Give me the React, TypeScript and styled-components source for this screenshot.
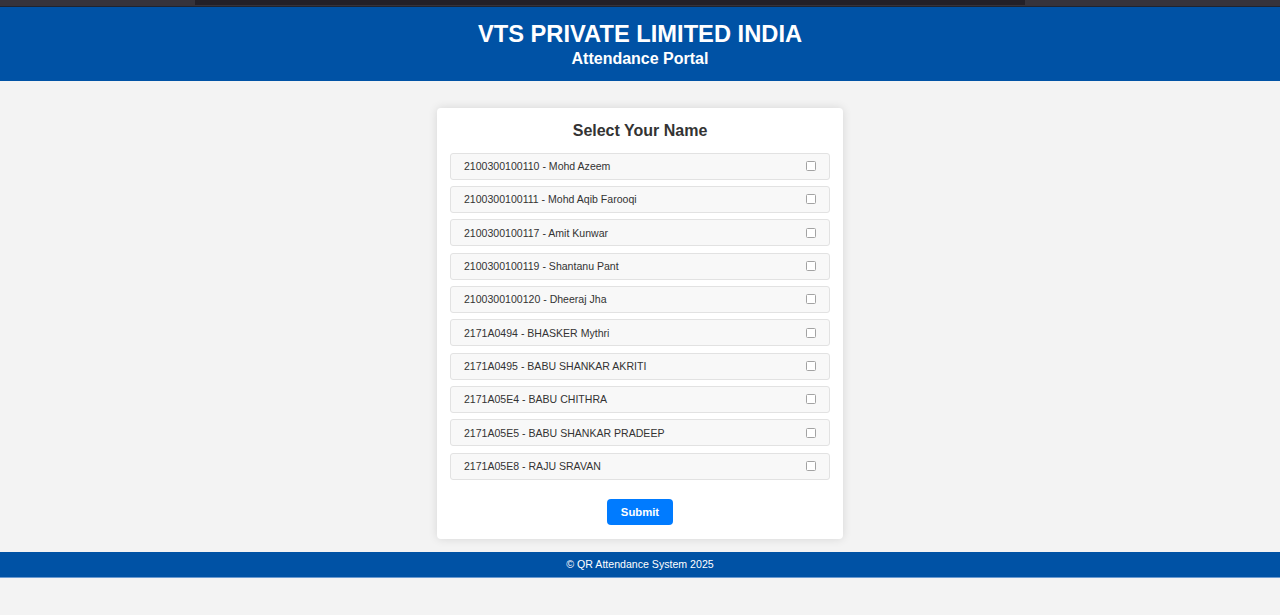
import React from "react";
import styled, { createGlobalStyle } from "styled-components";

const GlobalStyle = createGlobalStyle`
  html, body {
    margin: 0;
    padding: 0;
    background: #f3f3f3;
    font-family: "Liberation Sans", Arial, sans-serif;
  }
  * { box-sizing: border-box; }
`;

const Page = styled.div`
  display: flex;
  flex-direction: column;
  min-height: 615px;
  background: #f3f3f3;
`;

const TopStrip = styled.div`
  height: 7px;
  background: #36333b;
  border-bottom: 1px solid #1f2430;
  display: flex;
  padding-left: 195px;
`;

const TopTab = styled.div`
  width: 830px;
  height: 5px;
  background: #232028;
`;

const Header = styled.header`
  background: #0052a5;
  color: #ffffff;
  text-align: center;
  padding: 13px 0 13px;
`;

const Title = styled.h1`
  margin: 0;
  font-size: 23.7px;
  line-height: 28px;
  font-weight: 700;
`;

const Subtitle = styled.h2`
  margin: 1px 0 0;
  font-size: 16px;
  line-height: 19px;
  font-weight: 700;
`;

const Main = styled.main`
  display: flex;
  justify-content: center;
  padding: 27px 0 13px;
`;

const Card = styled.form`
  width: 406px;
  background: #ffffff;
  border-radius: 4px;
  box-shadow: 0 0 10px rgba(0, 0, 0, 0.12);
  padding: 13px 13px 14px;
  display: flex;
  flex-direction: column;
`;

const CardTitle = styled.h3`
  margin: 0 0 12.6px;
  text-align: center;
  font-size: 16px;
  line-height: 19px;
  font-weight: 700;
  color: #333333;
`;

const List = styled.div`
  display: flex;
  flex-direction: column;
  gap: 6.33px;
`;

const Item = styled.label`
  display: flex;
  align-items: center;
  justify-content: space-between;
  height: 27px;
  padding: 0 13px;
  background: #f8f8f8;
  border: 1px solid #e2e2e2;
  border-radius: 3px;
  font-size: 10.55px;
  color: #333333;
`;

const Check = styled.input`
  appearance: none;
  margin: 0;
  width: 10px;
  height: 10px;
  border: 1px solid #a3a3a3;
  border-radius: 1.5px;
  background: #ffffff;
`;

const ButtonRow = styled.div`
  display: flex;
  justify-content: center;
  margin-top: 19px;
`;

const SubmitButton = styled.button`
  width: 66px;
  height: 26px;
  border: none;
  border-radius: 4px;
  background: #007bff;
  color: #ffffff;
  font-family: "Liberation Sans", Arial, sans-serif;
  font-weight: 700;
  font-size: 11.3px;
  padding: 0;
`;

const Footer = styled.footer`
  background: #0052a5;
  color: #ffffff;
  height: 26px;
  display: flex;
  align-items: center;
  justify-content: center;
  font-size: 10.6px;
  border-bottom: 1px solid #6b9ad0;
`;

const students = [
  "2100300100110 - Mohd Azeem",
  "2100300100111 - Mohd Aqib Farooqi",
  "2100300100117 - Amit Kunwar",
  "2100300100119 - Shantanu Pant",
  "2100300100120 - Dheeraj Jha",
  "2171A0494 - BHASKER Mythri",
  "2171A0495 - BABU SHANKAR AKRITI",
  "2171A05E4 - BABU CHITHRA",
  "2171A05E5 - BABU SHANKAR PRADEEP",
  "2171A05E8 - RAJU SRAVAN",
];

export default function App() {
  return (
    <Page>
      <GlobalStyle />
      <TopStrip>
        <TopTab />
      </TopStrip>
      <Header>
        <Title>VTS PRIVATE LIMITED INDIA</Title>
        <Subtitle>Attendance Portal</Subtitle>
      </Header>
      <Main>
        <Card onSubmit={(e) => e.preventDefault()}>
          <CardTitle>Select Your Name</CardTitle>
          <List>
            {students.map((s) => (
              <Item key={s}>
                <span>{s}</span>
                <Check type="checkbox" />
              </Item>
            ))}
          </List>
          <ButtonRow>
            <SubmitButton type="submit">Submit</SubmitButton>
          </ButtonRow>
        </Card>
      </Main>
      <Footer>© QR Attendance System 2025</Footer>
    </Page>
  );
}
